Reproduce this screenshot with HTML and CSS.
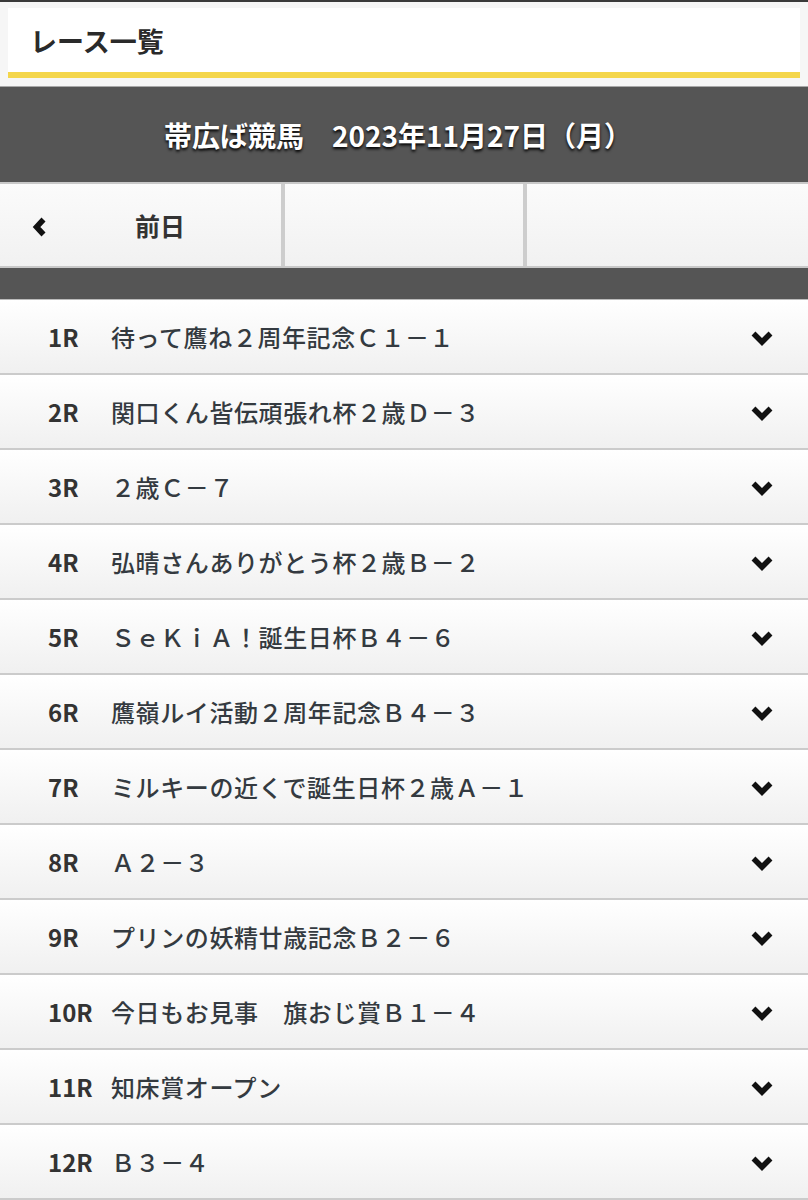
FILE: index.html
```html
<!DOCTYPE html>
<html lang="ja">
<head>
<meta charset="utf-8">
<title>レース一覧</title>
<link rel="stylesheet" href="styles.css">
</head>
<body>
<header class="page-header">
  <h1 class="page-title">レース一覧</h1>
</header>
<div class="venue-bar">帯広ば競馬　2023年11月27日（月）</div>
<nav class="day-nav">
  <a class="day-btn prev">
    <svg class="chev-left" viewBox="0 0 18 24" width="18" height="24"><path d="M13.5 4.5 L6.5 12 L13.5 19.5" fill="none" stroke="#111" stroke-width="5.5"/></svg>
    <span class="day-label">前日</span>
  </a>
  <a class="day-btn"></a>
  <a class="day-btn"></a>
</nav>
<div class="sub-bar"></div>
<ul class="race-list">
  <li class="race"><span class="rno">1R</span><span class="rname">待って鷹ね２周年記念Ｃ１－１</span><svg class="chev" viewBox="0 0 24 16" width="24" height="16"><path d="M3.5 3.5 L12 12 L20.5 3.5" fill="none" stroke="#111" stroke-width="5.5"/></svg></li>
  <li class="race"><span class="rno">2R</span><span class="rname">関口くん皆伝頑張れ杯２歳Ｄ－３</span><svg class="chev" viewBox="0 0 24 16" width="24" height="16"><path d="M3.5 3.5 L12 12 L20.5 3.5" fill="none" stroke="#111" stroke-width="5.5"/></svg></li>
  <li class="race"><span class="rno">3R</span><span class="rname">２歳Ｃ－７</span><svg class="chev" viewBox="0 0 24 16" width="24" height="16"><path d="M3.5 3.5 L12 12 L20.5 3.5" fill="none" stroke="#111" stroke-width="5.5"/></svg></li>
  <li class="race"><span class="rno">4R</span><span class="rname">弘晴さんありがとう杯２歳Ｂ－２</span><svg class="chev" viewBox="0 0 24 16" width="24" height="16"><path d="M3.5 3.5 L12 12 L20.5 3.5" fill="none" stroke="#111" stroke-width="5.5"/></svg></li>
  <li class="race"><span class="rno">5R</span><span class="rname">ＳｅＫｉＡ！誕生日杯Ｂ４－６</span><svg class="chev" viewBox="0 0 24 16" width="24" height="16"><path d="M3.5 3.5 L12 12 L20.5 3.5" fill="none" stroke="#111" stroke-width="5.5"/></svg></li>
  <li class="race"><span class="rno">6R</span><span class="rname">鷹嶺ルイ活動２周年記念Ｂ４－３</span><svg class="chev" viewBox="0 0 24 16" width="24" height="16"><path d="M3.5 3.5 L12 12 L20.5 3.5" fill="none" stroke="#111" stroke-width="5.5"/></svg></li>
  <li class="race"><span class="rno">7R</span><span class="rname">ミルキーの近くで誕生日杯２歳Ａ－１</span><svg class="chev" viewBox="0 0 24 16" width="24" height="16"><path d="M3.5 3.5 L12 12 L20.5 3.5" fill="none" stroke="#111" stroke-width="5.5"/></svg></li>
  <li class="race"><span class="rno">8R</span><span class="rname">Ａ２－３</span><svg class="chev" viewBox="0 0 24 16" width="24" height="16"><path d="M3.5 3.5 L12 12 L20.5 3.5" fill="none" stroke="#111" stroke-width="5.5"/></svg></li>
  <li class="race"><span class="rno">9R</span><span class="rname">プリンの妖精廿歳記念Ｂ２－６</span><svg class="chev" viewBox="0 0 24 16" width="24" height="16"><path d="M3.5 3.5 L12 12 L20.5 3.5" fill="none" stroke="#111" stroke-width="5.5"/></svg></li>
  <li class="race"><span class="rno">10R</span><span class="rname">今日もお見事　旗おじ賞Ｂ１－４</span><svg class="chev" viewBox="0 0 24 16" width="24" height="16"><path d="M3.5 3.5 L12 12 L20.5 3.5" fill="none" stroke="#111" stroke-width="5.5"/></svg></li>
  <li class="race"><span class="rno">11R</span><span class="rname">知床賞オープン</span><svg class="chev" viewBox="0 0 24 16" width="24" height="16"><path d="M3.5 3.5 L12 12 L20.5 3.5" fill="none" stroke="#111" stroke-width="5.5"/></svg></li>
  <li class="race"><span class="rno">12R</span><span class="rname">Ｂ３－４</span><svg class="chev" viewBox="0 0 24 16" width="24" height="16"><path d="M3.5 3.5 L12 12 L20.5 3.5" fill="none" stroke="#111" stroke-width="5.5"/></svg></li>
</ul>
</body>
</html>
```
FILE: styles.css
```css
html, body {
  margin: 0;
  padding: 0;
}
body {
  background: #f6f6f6;
  border-top: 2px solid #3a3a3a;
  font-family: "Noto Sans CJK JP", "Noto Sans", sans-serif;
  color: #333;
}
.page-header {
  margin: 6px 8px 0;
  background: #fff;
  height: 64px;
  border-bottom: 6px solid #f4d64b;
  display: flex;
  align-items: center;
  padding-left: 22px;
}
.page-title {
  margin: 0;
  font-size: 27px;
  font-weight: 700;
  color: #2a2a2a;
  line-height: 1;
}
.venue-bar {
  margin-top: 8px;
  border-top: 1px solid #a8a8a8;
  background: #555;
  height: 95px;
  display: flex;
  align-items: center;
  justify-content: center;
  color: #fff;
  font-size: 28px;
  font-weight: 700;
  text-shadow: 0 2px 3px #000;
  padding-right: 12px;
}
.day-nav {
  display: grid;
  grid-template-columns: 281px 1fr 281px;
  gap: 4px;
  background: #cdcdcd;
  border-top: 2px solid #c8c8c8;
  border-bottom: 2px solid #c8c8c8;
  height: 82px;
}
.day-btn {
  background: linear-gradient(#fbfbfb, #f1f1f1);
  display: flex;
  align-items: center;
  text-decoration: none;
  color: #333;
}
.day-btn.prev {
  padding-left: 30px;
}
.chev-left {
  display: block;
  margin-top: 3px;
}
.day-label {
  margin-left: 87px;
  font-size: 25px;
  font-weight: 700;
  color: #333;
}
.sub-bar {
  background: #555;
  height: 31px;
  border-bottom: 1px solid #bbb;
}
.race-list {
  list-style: none;
  margin: 0;
  padding: 0;
}
.race {
  height: 73px;
  border-bottom: 2px solid #cbcbcb;
  background: linear-gradient(#ffffff, #f0f0f0);
  display: flex;
  align-items: center;
  padding-left: 48px;
  padding-right: 34px;
  font-size: 24px;
}
.rno {
  width: 63px;
  font-weight: 700;
  flex: none;
}
.rname {
  flex: 1;
  font-weight: 500;
  color: #343a40;
  letter-spacing: 0.6px;
}
.chev {
  display: block;
  flex: none;
  margin-top: 3px;
}
```
